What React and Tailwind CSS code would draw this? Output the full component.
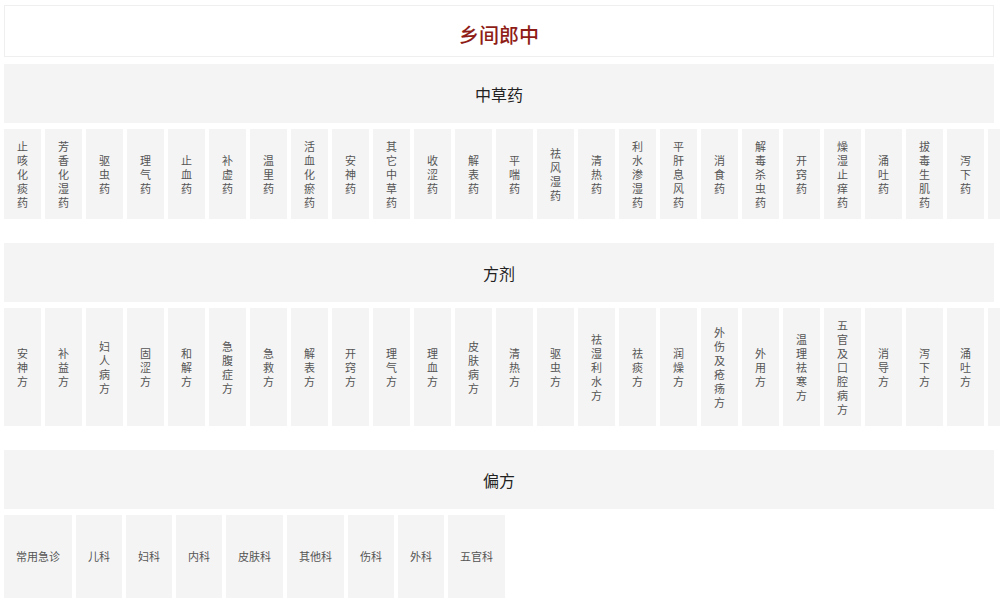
import React from "react";

const herbs = ["止咳化痰药","芳香化湿药","驱虫药","理气药","止血药","补虚药","温里药","活血化瘀药","安神药","其它中草药","收涩药","解表药","平喘药","祛风湿药","清热药","利水渗湿药","平肝息风药","消食药","解毒杀虫药","开窍药","燥湿止痒药","涌吐药","拔毒生肌药","泻下药"];
const formulas = ["安神方","补益方","妇人病方","固涩方","和解方","急腹症方","急救方","解表方","开窍方","理气方","理血方","皮肤病方","清热方","驱虫方","祛湿利水方","祛痰方","润燥方","外伤及疮疡方","外用方","温理祛寒方","五官及口腔病方","消导方","泻下方","涌吐方"];
const folk = ["常用急诊","儿科","妇科","内科","皮肤科","其他科","伤科","外科","五官科"];

const font = { fontFamily: '"Noto Sans CJK SC", "Noto Sans", sans-serif' };

function SectionTitle({ children }) {
  return (
    <div className="h-[59px] w-[990px] bg-[#f4f4f4] flex items-center justify-center text-[16px] text-[#222]">
      {children}
    </div>
  );
}

function VRow({ items, className }) {
  return (
    <div className={"flex flex-nowrap gap-[4px] overflow-hidden w-[996px] " + className}>
      {items.map((t) => (
        <div key={t} className="shrink-0 w-[37px] bg-[#f4f4f4] py-[10px] flex flex-col items-center justify-center text-[11px] leading-[14px] text-[#555]">
          {t.split("").map((c, i) => (
            <span key={i}>{c}</span>
          ))}
        </div>
      ))}
      <div className="shrink-0 w-[37px] bg-[#f4f4f4]" />
    </div>
  );
}

export default function App() {
  return (
    <div style={font} className="w-[1000px] h-[604px] overflow-hidden bg-white pt-[5px] pl-[4px]">
      <div className="h-[52px] w-[990px] border border-[#efefef] flex justify-center pt-[15px] text-[20px] leading-[28px] font-medium text-[#8f1d17]">
        乡间郎中
      </div>
      <div className="mt-[7px]">
        <SectionTitle>中草药</SectionTitle>
      </div>
      <VRow items={herbs} className="mt-[6px]" />
      <div className="mt-[24px]">
        <SectionTitle>方剂</SectionTitle>
      </div>
      <VRow items={formulas} className="mt-[6px]" />
      <div className="mt-[24px]">
        <SectionTitle>偏方</SectionTitle>
      </div>
      <div className="mt-[6px] flex gap-[4px]">
        {folk.map((t) => (
          <div key={t} className="h-[83px] bg-[#f4f4f4] px-[12px] flex items-center justify-center text-[11px] text-[#555]">
            {t}
          </div>
        ))}
      </div>
    </div>
  );
}
